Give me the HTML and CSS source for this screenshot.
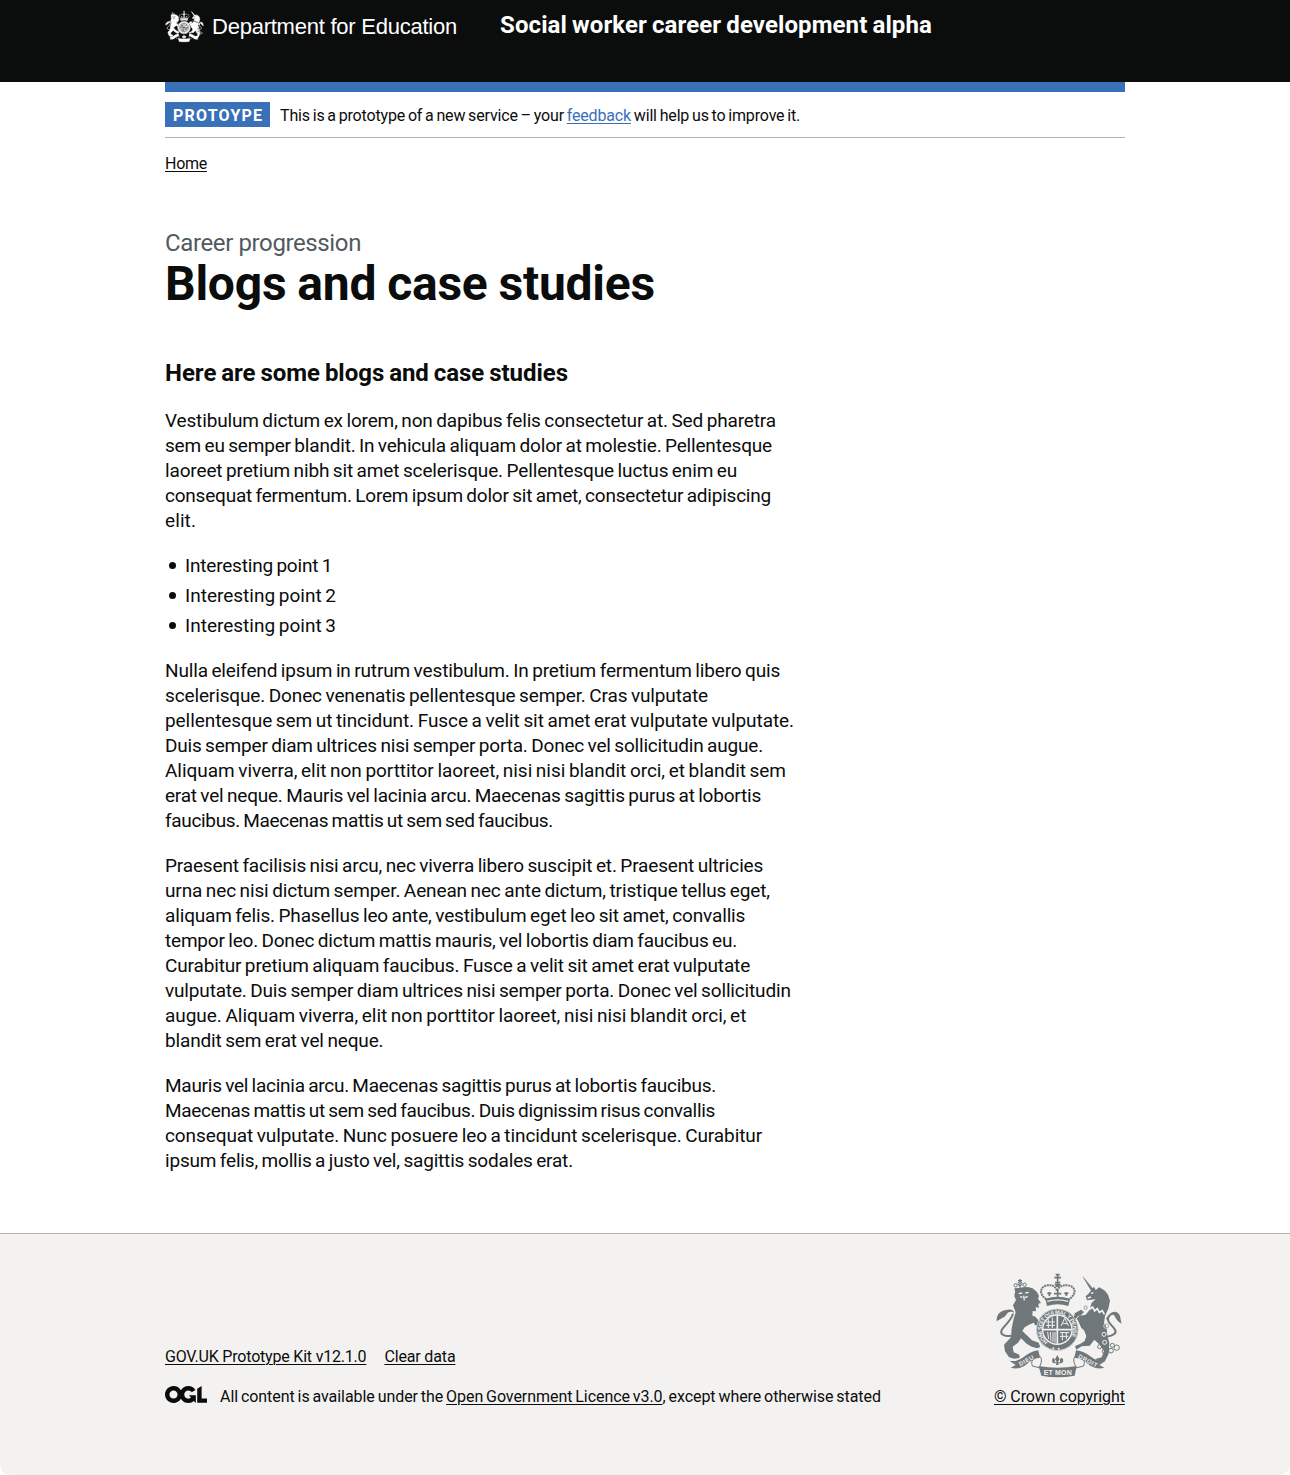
FILE: index.html
```html
<!DOCTYPE html>
<html lang="en">
<head>
<meta charset="utf-8">
<title>Blogs and case studies</title>
<link rel="stylesheet" href="styles.css">
</head>
<body>
<svg class="sprite" aria-hidden="true">
  <symbol id="crest-art" viewBox="27 22 390 318">
    <g fill="currentColor">
      <!-- lion -->
      <path d="M92 70L106 67L128 64L143 68L156 79L162 91L159 99L168 112L160 114L162 127L152 124L153 137L143 136L142 150L153 153L166 170L177 184L170 188L159 180L150 178L146 171L132 177L119 185L112 196L128 211L141 224L161 231L166 244L156 248L140 243L125 234L108 218L99 231L83 243L86 260L103 267L104 277L87 279L72 275L60 257L57 237L78 215L80 188L86 160L92 140L84 119L93 103L88 91Z"/>
      <path d="M35 167C34 150 42 138 60 134C76 128 85 132 88 142C78 134 68 139 64 147C58 156 47 158 35 167Z"/>
      <!-- lion's crown -->
      <path d="M90 77L88 68L124 64L123 75Z"/>
      <!-- unicorn -->
      <path d="M292 32L297 36L329 75L322 81Z"/>
      <path d="M306 104L302 92L312 83L320 71L327 63L332 73L343 65L360 75L369 87L375 105L370 129L360 151L357 172L365 187L367 211L373 231L371 264L360 286L344 290L331 280L350 275L357 257L345 238L328 222L314 240L290 242L274 252L270 241L285 235L299 226L304 211L297 194L289 187L278 162L266 158L269 143L288 132L297 139L286 150L302 147L313 134L320 111L332 101Z"/>
      <path d="M363 159C374 139 388 133 399 142C408 150 406 163 410 174C397 168 392 157 387 148C378 145 373 155 369 166Z"/>
      <!-- ribbon -->
      <path d="M73 285Q96 290 116 274Q136 257 160 254L165 276Q145 278 132 290Q107 315 77 306L92 298Z"/>
      <path d="M362 285Q339 290 319 274Q299 257 273 254L268 276Q288 278 303 290Q328 315 358 306L343 298Z"/>
      <path d="M161 301Q218 312 275 301L269 330Q218 339 169 330Z"/>
      <circle cx="217" cy="192" r="63"/>
    </g>
    <g fill="none" stroke="currentColor" stroke-width="4">
      <path d="M79 210C54 215 43 203 52 190C60 178 80 163 84 144" stroke-width="6"/>
      <path d="M365 213C386 210 396 202 390 192C382 178 364 169 370 158" stroke-width="6"/>
      <path d="M151 263Q180 273 164 303M283 263Q256 273 272 303M149 279Q136 284 142 301L173 309M289 279Q302 284 296 301L264 309" stroke-width="3"/>
      <circle cx="92" cy="59" r="5" stroke-width="3"/><circle cx="105" cy="54" r="6" stroke-width="3"/><circle cx="119" cy="57" r="5" stroke-width="3"/>
      <path d="M105 40V66M99 45H111" stroke-width="4"/>
      <circle cx="302" cy="126" r="5" stroke-width="2"/><circle cx="365" cy="181" r="6" stroke-width="3"/><circle cx="382" cy="239" r="6" stroke-width="3"/><circle cx="344" cy="243" r="6" stroke-width="3"/><circle cx="359" cy="257" r="7" stroke-width="3"/><circle cx="378" cy="255" r="7" stroke-width="3"/><circle cx="395" cy="246" r="8" stroke-width="3"/>
      <!-- crown -->
      <path d="M184 101C157 82 169 61 187 59C204 56 213 65 216 76C222 62 233 57 249 59C270 62 279 82 252 101" stroke-width="6" stroke-dasharray="6 2"/>
      <path d="M218 27V58M208 36H228M210 51H226M212 27H224" stroke-width="5"/>
      <path d="M218 72V96M207 84H229M193 91V79M187 83H199M244 91V79M238 83H250" stroke-width="5"/>
    </g>
    <path fill="currentColor" d="M181 99Q218 88 255 99L250 121Q218 111 186 121ZM208 55H228L222 64H214Z"/>
    <g class="crest-cut" fill="none">
      <circle cx="217" cy="192" r="62" stroke-width="2"/>
      <circle cx="217" cy="192" r="44" stroke-width="4"/>
      <path d="M217 149V235M174 192H260" stroke-width="5"/>
      <path d="M183 169H210M183 179H210M190 161V187M202 156V187M225 201H253M225 212H250M232 199V224M244 199V220M228 181L239 158L251 181M233 174H247M188 199L191 220M196 199L198 226M204 199L204 229M210 199L210 231" stroke-width="3"/>
      <path d="M309 117L315 130L323 124L329 136L337 129L343 140L352 135L358 146" stroke-width="5"/>
      <path d="M101 84L112 82M121 82L131 80M116 90L118 104M106 92L112 96M120 96L128 92M187 107Q218 98 249 107M308 97L318 94M318 83L325 81" stroke-width="4"/>
      <path d="M150 150L165 168M282 150L273 160" stroke-width="3"/>
      <circle cx="363" cy="181" r="7" stroke-width="2"/><circle cx="357" cy="206" r="6" stroke-width="3"/><circle cx="359" cy="230" r="6" stroke-width="3"/>
    </g>
    <path fill="currentColor" d="M217 268L224 281L219 289L221 298H213L215 289L210 281ZM202 281C204 272 212 279 209 290H226C222 279 230 272 234 281C237 291 229 294 225 293H209C202 293 200 288 202 281Z"/>
    <circle class="crest-dot" cx="205" cy="248" r="3"/><circle class="crest-dot" cx="221" cy="249" r="3"/>
  </symbol>
</svg>

<header class="header">
  <div class="container header-row">
    <a class="brand" href="#">
      <svg class="brand-crest"><use href="#crest-art"/></svg>
      <span class="brand-name">Department for Education</span>
    </a>
    <a class="service-name" href="#">Social worker career development alpha</a>
  </div>
</header>

<div class="container">
  <div class="phase-banner">
    <strong class="tag">PROTOYPE</strong>
    <span class="phase-text">This is a prototype of a new service – your <a href="#">feedback</a> will help us to improve it.</span>
  </div>
  <nav class="breadcrumbs"><a href="#">Home</a></nav>

  <main class="main">
    <span class="caption">Career progression</span>
    <h1>Blogs and case studies</h1>
    <h2>Here are some blogs and case studies</h2>
    <p class="intro">
      <span>Vestibulum dictum ex lorem, non dapibus felis consectetur at. Sed pharetra</span>
      <span>sem eu semper blandit. In vehicula aliquam dolor at molestie. Pellentesque</span>
      <span>laoreet pretium nibh sit amet scelerisque. Pellentesque luctus enim eu</span>
      <span>consequat fermentum. Lorem ipsum dolor sit amet, consectetur adipiscing</span>
      <span>elit.</span>
    </p>
    <ul>
      <li>Interesting point 1</li>
      <li>Interesting point 2</li>
      <li>Interesting point 3</li>
    </ul>
    <p class="story">
      <span>Nulla eleifend ipsum in rutrum vestibulum. In pretium fermentum libero quis</span>
      <span>scelerisque. Donec venenatis pellentesque semper. Cras vulputate</span>
      <span>pellentesque sem ut tincidunt. Fusce a velit sit amet erat vulputate vulputate.</span>
      <span>Duis semper diam ultrices nisi semper porta. Donec vel sollicitudin augue.</span>
      <span>Aliquam viverra, elit non porttitor laoreet, nisi nisi blandit orci, et blandit sem</span>
      <span>erat vel neque. Mauris vel lacinia arcu. Maecenas sagittis purus at lobortis</span>
      <span>faucibus. Maecenas mattis ut sem sed faucibus.</span>
    </p>
    <p class="detail">
      <span>Praesent facilisis nisi arcu, nec viverra libero suscipit et. Praesent ultricies</span>
      <span>urna nec nisi dictum semper. Aenean nec ante dictum, tristique tellus eget,</span>
      <span>aliquam felis. Phasellus leo ante, vestibulum eget leo sit amet, convallis</span>
      <span>tempor leo. Donec dictum mattis mauris, vel lobortis diam faucibus eu.</span>
      <span>Curabitur pretium aliquam faucibus. Fusce a velit sit amet erat vulputate</span>
      <span>vulputate. Duis semper diam ultrices nisi semper porta. Donec vel sollicitudin</span>
      <span>augue. Aliquam viverra, elit non porttitor laoreet, nisi nisi blandit orci, et</span>
      <span>blandit sem erat vel neque.</span>
    </p>
    <p class="closing">
      <span>Mauris vel lacinia arcu. Maecenas sagittis purus at lobortis faucibus.</span>
      <span>Maecenas mattis ut sem sed faucibus. Duis dignissim risus convallis</span>
      <span>consequat vulputate. Nunc posuere leo a tincidunt scelerisque. Curabitur</span>
      <span>ipsum felis, mollis a justo vel, sagittis sodales erat.</span>
    </p>
  </main>
</div>

<footer class="footer">
  <div class="container footer-row">
    <div class="footer-meta">
      <div class="footer-links"><a class="kit" href="#">GOV.UK Prototype Kit v12.1.0</a><a class="clear" href="#">Clear data</a></div>
      <div class="licence">
        <svg class="ogl" viewBox="0 0 483.2 195.7"><path fill="currentColor" d="M421.5 142.8V.1l-50.7 32.3v161.1h112.4v-50.7zm-122.3-9.6A47.12 47.12 0 0 1 221 97.8c0-26 21.1-47.1 47.1-47.1 16.7 0 31.4 8.7 39.7 21.8l42.7-27.2A97.63 97.63 0 0 0 268.1 0c-36.5 0-68.3 20.1-85.1 49.7A98 98 0 0 0 97.8 0C43.9 0 0 43.9 0 97.8s43.9 97.8 97.8 97.8c36.5 0 68.3-20.1 85.1-49.7a97.76 97.76 0 0 0 149.6 25.4l19.4 22.2h3v-87.8h-80l24.3 27.5zM97.8 145c-26 0-47.1-21.1-47.1-47.1s21.1-47.1 47.1-47.1 47.1 21.1 47.1 47.1S123.8 145 97.8 145"/></svg>
        <span>All content is available under the <a href="#">Open Government Licence v3.0</a>, except where otherwise stated</span>
      </div>
    </div>
    <a class="copyright" href="#">
      <svg class="footer-crest" viewBox="27 22 390 318">
        <use href="#crest-art" x="27" y="22" width="390" height="318"/>
        <g class="crest-text">
          <path id="garter" d="M189 229A46.5 46.5 0 1 1 245 229" fill="none"/>
          <text font-size="17"><textPath href="#garter" textLength="210">HONI SOIT QUI MAL Y PENSE</textPath></text>
          <text x="106" y="302" font-size="18" textLength="48" transform="rotate(-29 106 302)">DIEU</text>
          <text x="176" y="328" font-size="21" textLength="84">ET MON</text>
          <text x="278" y="276" font-size="18" textLength="62" transform="rotate(28 278 276)">DROIT</text>
        </g>
      </svg>
      <span>© Crown copyright</span>
    </a>
  </div>
</footer>
</body>
</html>
```
FILE: styles.css
```css
* { box-sizing: border-box; }
body {
  margin: 0;
  background: #fff;
  color: #0b0c0c;
  font-family: Roboto, "Liberation Sans", sans-serif;
  font-size: 19px;
  line-height: 25px;
}
a { color: inherit; text-decoration-thickness: 1px; text-underline-offset: 2px; }
.sprite { display: block; width: 0; height: 0; }
.container { width: 960px; margin: 0 auto; }

.header { height: 82px; background: #0b0c0c; color: #fff; }
.header a { text-decoration: none; }
.header-row { display: flex; align-items: flex-start; }
.brand { display: flex; width: 335px; padding-top: 10px; gap: 8px; }
.brand-crest { width: 39px; height: 33px; --cut: #0b0c0c; stroke: #fff; stroke-width: 5px; }
.brand-name {
  font-family: "Liberation Sans", Arial, sans-serif;
  font-size: 22px;
  line-height: 34px;
  letter-spacing: -0.238px;
  white-space: nowrap;
}
.service-name { padding-top: 10px; font-size: 24px; font-weight: 700; line-height: 30px; letter-spacing: 0.1px; word-spacing: -1px; white-space: nowrap; }

.crest-cut { stroke: var(--cut); }
.crest-dot { fill: var(--cut); stroke: none; }
.crest-text { fill: #f3f2f1; font-family: "Liberation Sans", Arial, sans-serif; font-weight: 700; }

.phase-banner {
  display: flex;
  align-items: center;
  gap: 10px;
  height: 56px;
  border-top: 10px solid #3a70b7;
  border-bottom: 1px solid #b1b4b6;
  font-size: 16px;
  line-height: 20px;
}
.phase-banner a { color: #3a70b7; }
.phase-text { padding-top: 2px; letter-spacing: -0.16px; word-spacing: -1px; }
.tag { width: 105px; height: 25px; padding-left: 8px; background: #3a70b7; color: #fff; line-height: 27px; letter-spacing: 1.2px; }
.breadcrumbs { padding-top: 16px; font-size: 16px; line-height: 20px; letter-spacing: -0.27px; }

.main { width: 640px; padding-top: 53px; }
.caption { display: block; color: #505a5f; font-size: 24px; line-height: 32px; letter-spacing: -0.38px; }
h1 { margin: 0 0 49px; font-size: 48px; line-height: 50px; letter-spacing: -0.24px; word-spacing: -0.7px; }
h2 { margin: 0 0 20px; font-size: 24px; line-height: 30px; letter-spacing: -0.03px; word-spacing: -1px; }
p { margin: 0 0 20px; white-space: nowrap; word-spacing: -1px; letter-spacing: -0.15px; }
p span { display: block; }
ul { margin: 0 0 20px; padding: 0; list-style: none; word-spacing: -1px; }
li { display: flex; align-items: center; gap: 9px; margin-bottom: 5px; padding-left: 4px; }
li::before { content: ""; width: 7px; height: 7px; border-radius: 50%; background: #0b0c0c; }
li:first-child { letter-spacing: -0.2px; }

/* line tracking */
.intro span:nth-child(2) { letter-spacing: -0.188px; }
.intro span:nth-child(3) { letter-spacing: -0.141px; }
.intro span:nth-child(4) { letter-spacing: -0.22px; }
.intro span:nth-child(5) { letter-spacing: 0.09px; }
.story span:nth-child(2) { letter-spacing: -0.133px; }
.story span:nth-child(3) { letter-spacing: -0.071px; }
.story span:nth-child(4) { letter-spacing: -0.192px; }
.story span:nth-child(5) { letter-spacing: -0.048px; }
.story span:nth-child(6) { letter-spacing: -0.212px; }
.story span:nth-child(7) { letter-spacing: -0.337px; }
.detail span:nth-child(2) { letter-spacing: -0.128px; }
.detail span:nth-child(4) { letter-spacing: -0.2px; }
.detail span:nth-child(6) { letter-spacing: -0.163px; }
.detail span:nth-child(7) { letter-spacing: -0.035px; }
.closing span:nth-child(1) { letter-spacing: -0.261px; }
.closing span:nth-child(2) { letter-spacing: -0.322px; }
.closing span:nth-child(3) { letter-spacing: -0.093px; }
.closing span:nth-child(4) { letter-spacing: -0.184px; }

.footer { height: 242px; margin-top: 60px; border-top: 1px solid #b1b4b6; background: #f3f2f1; border-radius: 0 0 10px 10px; font-size: 16px; line-height: 20px; }
.footer-row { display: flex; justify-content: space-between; align-items: flex-end; padding-top: 39px; }
.footer-links { display: flex; gap: 18px; margin-bottom: 20px; }
.kit { letter-spacing: -0.2px; }
.clear { letter-spacing: -0.15px; }
.licence { display: flex; gap: 13px; }
.licence span { letter-spacing: -0.06px; word-spacing: -1px; }
.ogl { width: 42px; height: 17px; margin-top: -1px; }
.copyright { display: flex; flex-direction: column; width: 131px; letter-spacing: -0.1px; white-space: nowrap; }
.footer-crest { width: 130px; height: 106px; margin-bottom: 8px; color: #6f777b; --cut: #f3f2f1; }
```
